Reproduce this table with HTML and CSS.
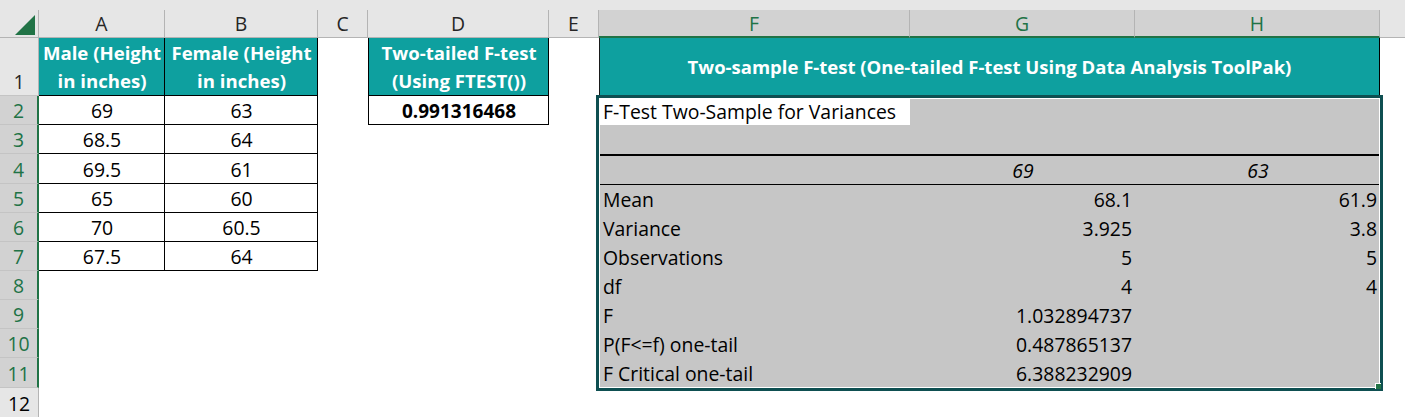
FILE: index.html
```html
<!DOCTYPE html>
<html lang="en">
<head>
<meta charset="utf-8">
<title>F-test</title>
<link rel="stylesheet" href="styles.css">
</head>
<body>
<div class="sheet">
  <div class="strip"></div>

  <div class="corner"><svg width="39" height="28" viewBox="0 0 39 28"><polygon points="15,25 35,5 35,25" fill="#217346"/></svg></div>
  <div class="ch">A</div>
  <div class="ch">B</div>
  <div class="ch">C</div>
  <div class="ch">D</div>
  <div class="ch">E</div>
  <div class="ch on">F</div>
  <div class="ch on">G</div>
  <div class="ch on">H</div>
  <div class="ch end"></div>

  <div class="rh top">1</div>
  <div class="c hd b">Male (Height<br>in inches)</div>
  <div class="c hd b">Female (Height<br>in inches)</div>
  <div class="c"></div>
  <div class="c hd b bl">Two-tailed F-test<br>(Using FTEST())</div>
  <div class="c"></div>
  <div class="c title">Two-sample F-test (One-tailed F-test Using Data Analysis ToolPak)</div>
  <div class="c"></div>

  <div class="rh on">2</div>
  <div class="c b ctr">69</div>
  <div class="c b ctr">63</div>
  <div class="c"></div>
  <div class="c b bl ctr bold">0.991316468</div>
  <div class="c"></div>
  <div class="c act">F-Test Two-Sample for Variances</div>
  <div class="c g"></div>
  <div class="c g"></div>
  <div class="c"></div>

  <div class="rh on">3</div>
  <div class="c b ctr">68.5</div>
  <div class="c b ctr">64</div>
  <div class="c"></div><div class="c"></div><div class="c"></div>
  <div class="c g"></div>
  <div class="c g"></div>
  <div class="c g"></div>
  <div class="c"></div>

  <div class="rh on">4</div>
  <div class="c b ctr">69.5</div>
  <div class="c b ctr">61</div>
  <div class="c"></div><div class="c"></div><div class="c"></div>
  <div class="c g thick"></div>
  <div class="c g thick ctr it">69</div>
  <div class="c g thick ctr it">63</div>
  <div class="c"></div>

  <div class="rh on">5</div>
  <div class="c b ctr">65</div>
  <div class="c b ctr">60</div>
  <div class="c"></div><div class="c"></div><div class="c"></div>
  <div class="c g thin">Mean</div>
  <div class="c g thin num">68.1</div>
  <div class="c g thin num">61.9</div>
  <div class="c"></div>

  <div class="rh on">6</div>
  <div class="c b ctr">70</div>
  <div class="c b ctr">60.5</div>
  <div class="c"></div><div class="c"></div><div class="c"></div>
  <div class="c g">Variance</div>
  <div class="c g num">3.925</div>
  <div class="c g num">3.8</div>
  <div class="c"></div>

  <div class="rh on">7</div>
  <div class="c b ctr">67.5</div>
  <div class="c b ctr">64</div>
  <div class="c"></div><div class="c"></div><div class="c"></div>
  <div class="c g">Observations</div>
  <div class="c g num">5</div>
  <div class="c g num">5</div>
  <div class="c"></div>

  <div class="rh on">8</div>
  <div class="c"></div><div class="c"></div><div class="c"></div><div class="c"></div><div class="c"></div>
  <div class="c g">df</div>
  <div class="c g num">4</div>
  <div class="c g num">4</div>
  <div class="c"></div>

  <div class="rh on">9</div>
  <div class="c"></div><div class="c"></div><div class="c"></div><div class="c"></div><div class="c"></div>
  <div class="c g">F</div>
  <div class="c g num">1.032894737</div>
  <div class="c g"></div>
  <div class="c"></div>

  <div class="rh on">10</div>
  <div class="c"></div><div class="c"></div><div class="c"></div><div class="c"></div><div class="c"></div>
  <div class="c g">P(F&lt;=f) one-tail</div>
  <div class="c g num">0.487865137</div>
  <div class="c g"></div>
  <div class="c"></div>

  <div class="rh on">11</div>
  <div class="c"></div><div class="c"></div><div class="c"></div><div class="c"></div><div class="c"></div>
  <div class="c g">F Critical one-tail</div>
  <div class="c g num">6.388232909</div>
  <div class="c g"></div>
  <div class="c"></div>

  <div class="rh last">12</div>
  <div class="c"></div><div class="c"></div><div class="c"></div><div class="c"></div><div class="c"></div>
  <div class="c"></div><div class="c"></div><div class="c"></div><div class="c"></div>

  <div class="selbox"></div>
</div>
</body>
</html>
```

FILE: styles.css
```css
* { box-sizing: border-box; }

body {
  margin: 0;
  background: #fff;
  font-family: "Open Sans", "Liberation Sans", sans-serif;
  font-size: 19.4px;
  color: #000;
}

.sheet {
  position: relative;
  display: grid;
  grid-template-columns: 39px 126px 153px 50px 181px 50px 311px 225px 245px 1fr;
  grid-template-rows: 10px 28px 58px 29px 29px 30px 29px 29px 29px 29px 29px 29px 30px 29px;
  width: 1405px;
  height: 417px;
  overflow: hidden;
}

.strip {
  grid-column: 1 / -1;
  background: #e6e6e6;
}

.corner {
  background: #e6e6e6;
  border-right: 1px solid #b4b4b4;
  border-bottom: 1px solid #b4b4b4;
}
.corner svg { display: block; }

.ch {
  display: flex;
  align-items: center;
  justify-content: center;
  background: #e6e6e6;
  border-right: 1px solid #b4b4b4;
  border-bottom: 1px solid #b4b4b4;
  color: #262626;
  line-height: 1;
  padding-top: 1px;
}
.ch.on {
  background: #d2d2d2;
  border-bottom: 2px solid #217346;
  color: #217346;
}
.ch.end {
  border-right: none;
}

.rh {
  display: flex;
  align-items: center;
  justify-content: center;
  background: #e6e6e6;
  border-right: 1px solid #b4b4b4;
  border-bottom: 1px solid #c4c4c4;
  color: #262626;
  line-height: 1;
  padding-top: 2px;
}
.rh.top {
  align-items: flex-end;
  padding-bottom: 4px;
}
.rh.on {
  background: #d2d2d2;
  border-right: 2px solid #217346;
  color: #217346;
}
.rh.last {
  border-bottom: none;
  color: #000;
}

.c {
  display: flex;
  align-items: center;
  white-space: nowrap;
  min-width: 0;
  padding: 2px 3px 0 4px;
  line-height: 1;
}

.b {
  border-right: 1px solid #000;
  border-bottom: 1px solid #000;
}
.bl { border-left: 1px solid #000; }

.ctr { justify-content: center; }
.num { justify-content: flex-end; }
.bold { font-weight: 700; font-size: 19px; }
.it { font-style: italic; }

.hd {
  background: #0ea09f;
  color: #fff;
  font-weight: 700;
  font-size: 18.6px;
  justify-content: center;
  align-items: flex-end;
  text-align: center;
  line-height: 28px;
  padding: 0 0 0 1px;
}

.title {
  grid-column: span 3;
  justify-content: center;
  background: #0ea09f;
  color: #fff;
  font-weight: 700;
  font-size: 18.5px;
  border-left: 1px solid #1a1a1a;
  border-right: 1px solid #000;
  padding: 1px 0 0 0;
}

.act { background: #fff; }
.g { background: #c6c6c6; }
.thick { border-top: 2px solid #000; }
.thin { border-top: 1px solid #000; }

.selbox {
  position: absolute;
  grid-column: 7 / 10;
  grid-row: 4 / 14;
  top: -1px;
  left: -3px;
  right: -3px;
  bottom: -3px;
  border: 3px solid #0e4f51;
  box-shadow: inset 0 0 0 1px #fff;
  pointer-events: none;
}
.selbox::after {
  content: "";
  position: absolute;
  right: -1px;
  bottom: -1px;
  width: 5px;
  height: 5px;
  background: #217346;
  border-left: 1px solid #fff;
  border-top: 1px solid #fff;
}
```
